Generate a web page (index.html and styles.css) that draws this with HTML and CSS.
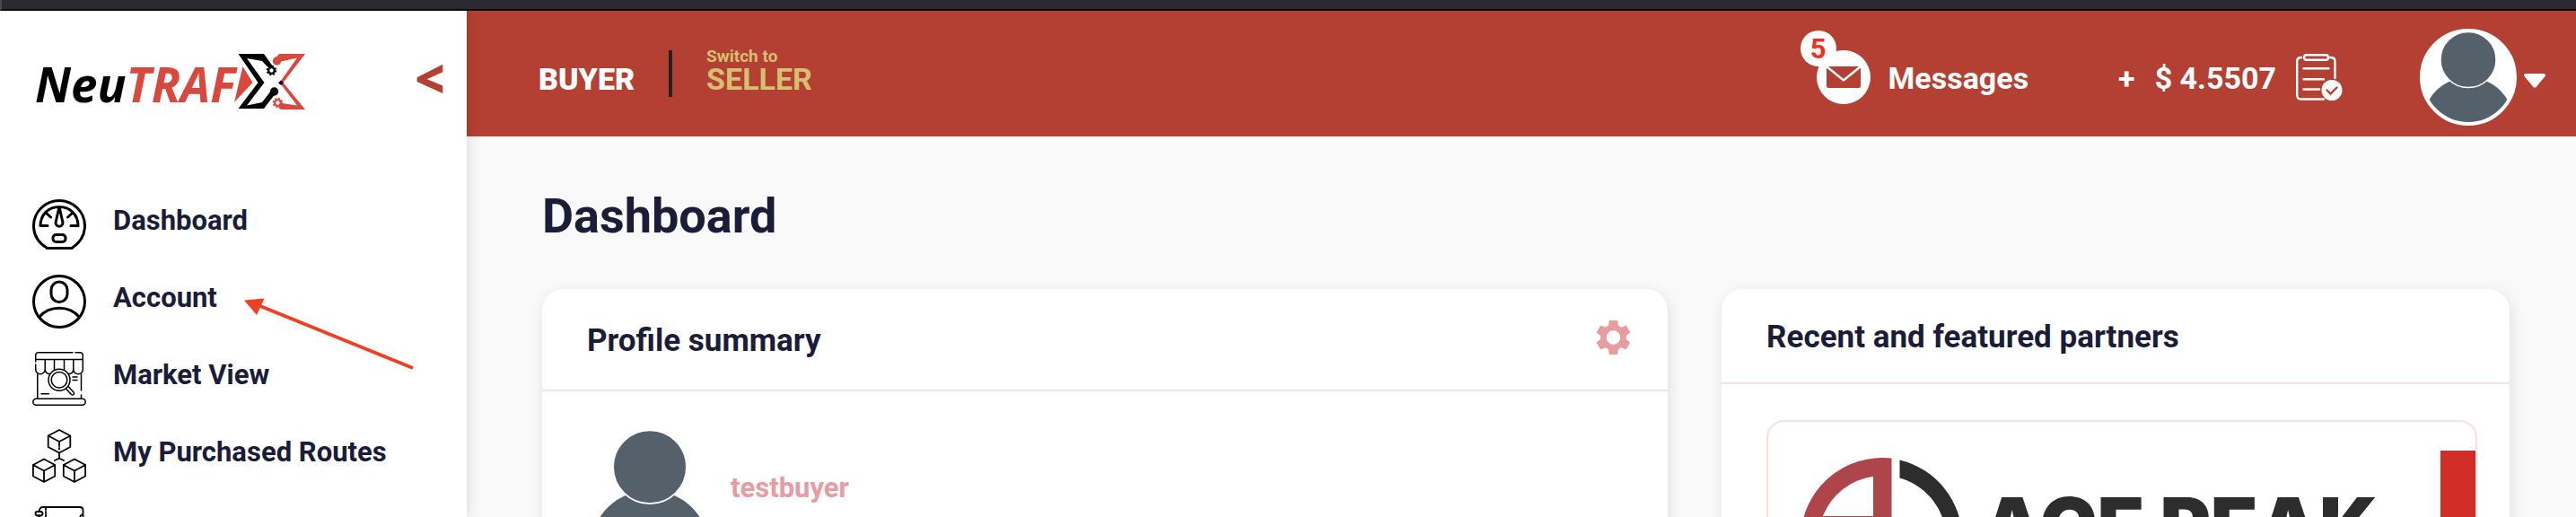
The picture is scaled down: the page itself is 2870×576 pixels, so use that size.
FILE: index.html
```html
<!DOCTYPE html>
<html lang="en">
<head>
<meta charset="utf-8">
<title>NeuTRAFX Dashboard</title>
<link rel="stylesheet" href="styles.css">
</head>
<body>
<svg class="sprite" aria-hidden="true">
  <symbol id="person" viewBox="0 0 100 100">
    <circle cx="50" cy="100.5" r="50.4" fill="#55616a"/>
    <circle cx="50" cy="30.5" r="31" fill="#55616a" stroke="#fff" stroke-width="1.4"/>
  </symbol>
</svg>
<div class="window-edge"></div>
<div class="app">
  <aside class="sidebar">
    <div class="brand">
      <svg class="logo" viewBox="36 52 306 76" role="img" aria-label="NeuTRAFX">
        <text class="logo-text" x="39" y="114">Neu<tspan fill="#d9483c">TRAF</tspan></text>
        <path d="M270.500 74 281.500 92 261 114Z" fill="#d9483c"/>
        <path d="M265.500 60H294L304 74 300.500 77 292 68 275 65 294.500 92 275 117.500 292 114 302 101 307 104 294 121H265.500L287.500 92Z" fill="#000"/>
        <path d="M340 60H311L306 66 311 69 331 64.500 311.500 92 331 117.500 314 115 310 120 313 122H340L315.500 92Z" fill="#d9483c"/>
        <circle cx="308.500" cy="68" r="4.700" fill="#d9483c"/>
        <circle cx="305.500" cy="102" r="4.700"/>
        <circle cx="302.500" cy="78.500" r="3.400" fill="#fff" stroke="#000" stroke-width="2.400"/>
        <circle cx="302.500" cy="78.500" r="5" fill="none" stroke="#000" stroke-width="1.600" stroke-dasharray="2 1.930"/>
        <circle cx="309.500" cy="114.500" r="3.400" fill="#fff" stroke="#d9483c" stroke-width="2.400"/>
        <circle cx="309.500" cy="114.500" r="5" fill="none" stroke="#d9483c" stroke-width="1.600" stroke-dasharray="2 1.930"/>
        <path d="M313 89.500 316 92.300 313 95 310 92.300Z"/>
      </svg>
      <button class="collapse" type="button" aria-label="Collapse menu">&lt;</button>
    </div>
    <nav class="nav">
      <a class="nav-item" href="#dashboard">
        <svg class="nav-icon" viewBox="0 0 60 60" stroke-width="3">
          <path d="M16 56C6 50 1.500 41 1.500 31.500a28.500 28 0 0 1 57 0C58.500 41 54 50 44 56.500H16Z"/>
          <path d="M17 31.500H9C9 19 18 10.500 30 10.500S51 19 51 31.500H43M15 17l5.500 5M45 17l-5.500 5M30 10.500 26 28c0 5.500 8 5.500 8 0Z"/>
          <rect x="23" y="41.500" width="14" height="8" rx="3.500"/>
        </svg>
        <span class="nav-label">Dashboard</span>
      </a>
      <a class="nav-item" href="#account">
        <svg class="nav-icon" viewBox="0 0 60 60" stroke-width="3">
          <circle cx="30" cy="30" r="28.500"/>
          <rect x="21" y="8" width="18" height="22.500" rx="9"/>
          <path d="M8 47c11-13 33-13 44 0"/>
        </svg>
        <span class="nav-label">Account</span>
      </a>
      <a class="nav-item" href="#market">
        <svg class="nav-icon" viewBox="0 0 60 60" stroke-width="1.500">
          <path d="M45 .8H7Q3.700.8 3.700 4v7M48 .8h5q3.300 0 3.300 3.200v16M3.700 8.500h52.600M3.700 14v5.500a5 5 0 0 0 10.500 0V8.500M24.500 8.500V20M35.500 8.500V20M45.800 8.500v11a5 5 0 0 0 10.500 0M14.200 20a5 5 0 0 0 8 3.500M45.800 20a5 5 0 0 1-8 3.500M5.800 25v27M54.500 25v18M54.500 48v4M10 46.800h8.500M45 28h5M45 31.500h5"/>
          <rect x=".8" y="52.300" width="58.400" height="7" rx="3.500"/>
          <circle cx="30" cy="31.300" r="12" fill="#fff"/>
          <circle cx="30" cy="31.300" r="8.800"/>
          <path d="m37.500 41 6 6.500c2 1.500 4-.5 2.500-2.500l-6-6.500"/>
        </svg>
        <span class="nav-label">Market View</span>
      </a>
      <a class="nav-item" href="#routes">
        <svg class="nav-icon" viewBox="0 0 60 60" stroke-width="1.800">
          <path d="m30 1 12.300 6.500v12.500L30 26.500 17.700 20V7.500ZM17.700 7.500 30 14l12.300-6.500M30 14v5M30 21v1.500M30 26.500v6.500M25 35l5-2.500 5 2.500"/>
          <path d="m13 33.500 12.200 6.500v12.500L13 59 .9 52.500V40ZM.9 40 13 46.500 25.200 40M13 46.500V59"/>
          <path d="M47 33.500 59.100 40v12.500L47 59l-12.200-6.500V40ZM34.800 40 47 46.500 59.100 40M47 46.500V59"/>
        </svg>
        <span class="nav-label">My Purchased Routes</span>
      </a>
      <a class="nav-item" href="#more" aria-label="More">
        <svg class="nav-icon" viewBox="0 0 60 60" stroke-width="1.800">
          <path d="M7.500 6Q8 1 12 1h41q3.500 0 3.500 3.500V60M15 1v3M15 6v1.500M15 9v3M7.500 10v50M56 9q-3 1-3 4"/>
          <rect x="3.500" y="6" width="8" height="4.500" rx="2.200"/>
        </svg>
      </a>
    </nav>
    <svg class="pointer" viewBox="0 0 190 80" aria-hidden="true">
      <path d="M18 9 188 78" stroke="#ee4124" stroke-width="4"/>
      <path d="M0 2.500 22.500.5 14 19Z" fill="#ee4124"/>
    </svg>
  </aside>
  <div class="content">
    <header class="topbar">
      <div class="roles">
        <strong class="role">BUYER</strong>
        <span class="role-divider"></span>
        <a class="switch" href="#seller"><span class="switch-hint">Switch to</span><span class="role">SELLER</span></a>
      </div>
      <div class="tools">
        <a class="messages" href="#messages">
          <span class="mail">
            <svg viewBox="0 0 60 60" class="mail-icon" aria-hidden="true">
              <circle cx="30" cy="30" r="30" fill="#fff"/>
              <rect x="11" y="18" width="38" height="24" rx="2" fill="#b34032"/>
              <path d="m11 18 19 15.500L49 18" fill="none" stroke="#fff" stroke-width="2.500"/>
            </svg>
            <span class="badge">5</span>
          </span>
          <span class="tool-text">Messages</span>
        </a>
        <a class="balance" href="#balance">
          <span class="tool-text">+</span>
          <span class="tool-text">$ 4.5507</span>
          <svg class="clipboard" viewBox="0 0 52 52" fill="none" stroke="#fff" stroke-width="2.400" stroke-linecap="round" aria-hidden="true">
            <path d="M6 4Q1.200 4 1.200 8v38q0 4.500 4.500 4.500H31M38 4q5.500 0 5.500 4v19M8.500 16.300h28M8.500 28.200H31M8.500 39.500H26"/>
            <rect x="9" y="1.200" width="27" height="5.500" rx="2.700"/>
            <circle cx="40" cy="40.500" r="11.500" fill="#fff" stroke="none"/>
            <path d="m34.500 40.500 4 4 7-7" stroke="#b34032"/>
          </svg>
        </a>
        <button class="user" type="button" aria-label="User menu">
          <svg class="avatar"><use href="#person"/></svg>
          <svg class="caret" viewBox="0 0 24 16"><path d="M2 0h20q3 .5 1.500 3L14 14.500q-2 2.500-4 0L.5 3Q-1 .5 2 0Z" fill="#fff"/></svg>
        </button>
      </div>
    </header>
    <main class="main">
      <h1 class="page-title">Dashboard</h1>
      <div class="cards">
        <section class="card">
          <div class="card-head profile-head">
            <h2 class="card-title">Profile summary</h2>
            <button class="settings" type="button" aria-label="Profile settings">
              <svg class="gear" viewBox="2.200 2 19.600 20"><path fill="#e79ca0" d="M19.140 12.940c.04-.3.060-.61.060-.94 0-.32-.02-.64-.07-.94l2.030-1.580c.18-.14.230-.41.120-.61l-1.920-3.320c-.12-.22-.37-.29-.59-.22l-2.390.96c-.5-.38-1.030-.7-1.620-.94l-.36-2.540c-.04-.24-.24-.41-.48-.41h-3.840c-.24 0-.43.170-.47.410l-.36 2.540c-.59.240-1.130.570-1.620.940l-2.390-.96c-.22-.08-.47 0-.59.220L2.740 8.870c-.12.210-.08.470.120.610l2.030 1.580c-.05.300-.09.630-.09.940s.02.640.070.940l-2.030 1.580c-.18.140-.23.410-.12.610l1.920 3.320c.12.220.37.290.59.220l2.390-.96c.5.380 1.030.700 1.620.940l.36 2.540c.05.240.240.410.480.410h3.840c.24 0 .44-.17.470-.41l.36-2.540c.59-.24 1.130-.56 1.620-.94l2.390.96c.22.080.470 0 .59-.22l1.920-3.320c.12-.22.070-.47-.12-.61l-2.010-1.580zM12 15.900a3.900 3.900 0 1 1 0-7.800 3.900 3.900 0 0 1 0 7.800z"/></svg>
            </button>
          </div>
          <div class="profile">
            <svg class="portrait"><use href="#person"/></svg>
            <span class="username">testbuyer</span>
          </div>
        </section>
        <section class="card">
          <div class="card-head">
            <h2 class="card-title">Recent and featured partners</h2>
          </div>
          <div class="partners">
            <div class="partner">
              <svg class="partner-mark" viewBox="0 0 182 182" aria-hidden="true">
                <path d="M101.500.6A91 91 0 1 0 101.500 181.400V.6ZM81 20.700V65H25A71 71 0 0 1 81 20.700Z" fill="#ad454a"/>
                <path d="M110.500 2.500A91 91 0 0 1 110.500 179.500V159.400A71 71 0 0 0 110.500 22.600Z" fill="#2d2d2d"/>
              </svg>
              <span class="partner-name">ACE PEAK</span>
            </div>
            <div class="partner-next"></div>
          </div>
        </section>
      </div>
    </main>
  </div>
</div>
</body>
</html>
```

FILE: styles.css
```css
* { box-sizing: border-box; }

body {
  margin: 0;
  height: 100vh;
  overflow: hidden;
  display: flex;
  flex-direction: column;
  background: #f9f9f9;
  color: #1b1d38;
  font-family: Roboto, "Open Sans", sans-serif;
  font-weight: 700;
}

a { color: inherit; text-decoration: none; }

button {
  padding: 0;
  border: 0;
  background: none;
  font: inherit;
  cursor: pointer;
}

svg { display: block; flex: none; }

.sprite { position: absolute; width: 0; height: 0; }

.window-edge {
  flex: none;
  height: 12px;
  background: #2b2a33;
  border-bottom: 2px solid #0c0b0e;
  border-left: 2px solid #4a4950;
}

.app { flex: 1; min-height: 0; display: flex; overflow: hidden; }

/* Sidebar */
.sidebar {
  position: relative;
  z-index: 1;
  flex: none;
  width: 520px;
  background: #fff;
  box-shadow: 0 0 14px rgba(0, 0, 0, 0.16);
}

.brand {
  height: 140px;
  padding: 10px 24px 0 36px;
  display: flex;
  align-items: center;
  justify-content: space-between;
}

.logo { width: 306px; height: 76px; margin-top: 6px; }

.logo-text { font: italic 700 53px "Open Sans", sans-serif; }

.collapse {
  color: #b34032;
  font: 800 58px/64px "Open Sans", sans-serif;
}

.nav {
  padding: 68px 36px 0;
  display: flex;
  flex-direction: column;
  gap: 26px;
}

.nav-item { display: flex; gap: 30px; }

.nav-icon {
  width: 60px;
  height: 60px;
  fill: none;
  stroke: #000;
  stroke-linejoin: round;
  stroke-linecap: round;
}

.nav-label { padding-top: 8px; font-size: 31px; line-height: 36px; }

.pointer {
  position: absolute;
  left: 272px;
  top: 320px;
  width: 190px;
  height: 80px;
  fill: none;
}

/* Top bar */
.content { flex: 1; min-width: 0; }

.topbar {
  height: 140px;
  padding: 0 34px 0 80px;
  display: flex;
  align-items: center;
  justify-content: space-between;
  background: #b34032;
  color: #fff;
}

.roles { height: 52px; display: flex; gap: 38px; align-items: flex-end; }

.role { display: block; padding-bottom: 4px; font-size: 34px; line-height: 32px; }

.role-divider { width: 4px; height: 52px; background: #222; }

.switch { color: #d6bf71; }

.switch-hint { display: block; font-size: 19px; line-height: 18px; }

.tools, .messages, .balance, .user { display: flex; align-items: center; }

.messages { gap: 20px; margin-right: 100px; }

.mail { position: relative; padding-top: 8px; }

.mail-icon { width: 60px; height: 60px; }

.badge {
  position: absolute;
  left: -18px;
  top: -14px;
  width: 40px;
  height: 40px;
  border-radius: 50%;
  background: #fff;
  color: #ef2f24;
  font-size: 31px;
  line-height: 42px;
  text-align: center;
}

.tool-text { padding-top: 10px; font-size: 34px; line-height: 40px; }

.balance { gap: 22px; margin-right: 86px; }

.clipboard { width: 52px; height: 52px; margin-top: 8px; }

.user { gap: 8px; padding-top: 8px; }

.avatar {
  width: 108px;
  height: 108px;
  border: 4px solid #fff;
  border-radius: 50%;
  background: #fff;
}

.caret { width: 24px; height: 16px; margin-top: 8px; }

/* Main */
.main { padding: 57px 74px 0 84px; }

.page-title { margin: 0 0 49px; font-size: 54px; line-height: 64px; }

.cards { display: grid; grid-template-columns: 10fr 7fr; gap: 60px; }

.card {
  min-height: 400px;
  border-radius: 24px;
  background: #fff;
  box-shadow: 2px 4px 16px rgba(0, 0, 0, 0.1);
}

.card-head {
  display: flex;
  align-items: flex-start;
  justify-content: space-between;
  padding: 34px 41px 30px 50px;
  border-bottom: 2px solid #f9e0e1;
}

.profile-head { padding-bottom: 34px; }

.profile-head .card-title { padding-top: 4px; }

.card-title { margin: 0; font-size: 35px; line-height: 40px; }

.gear { width: 39px; height: 40px; }

.profile { display: flex; gap: 24px; padding: 44px 54px; }

.portrait { width: 132px; height: 132px; }

.username { padding-top: 46px; color: #e79ca0; font-size: 31px; line-height: 36px; }

.partners {
  margin: 40px 36px 0 50px;
  height: 240px;
  display: flex;
  justify-content: space-between;
  border: 2px solid #f9e0e1;
  border-radius: 20px;
  overflow: hidden;
}

.partner { display: flex; gap: 20px; padding: 40px 0 0 36px; }

.partner-mark { width: 182px; height: 182px; }

.partner-name {
  padding-top: 28px;
  color: #2d2d2d;
  font: 900 86px/96px Inter, sans-serif;
  white-space: nowrap;
}

.partner-next { width: 39px; margin-top: 32px; background: #d12d26; }
```
